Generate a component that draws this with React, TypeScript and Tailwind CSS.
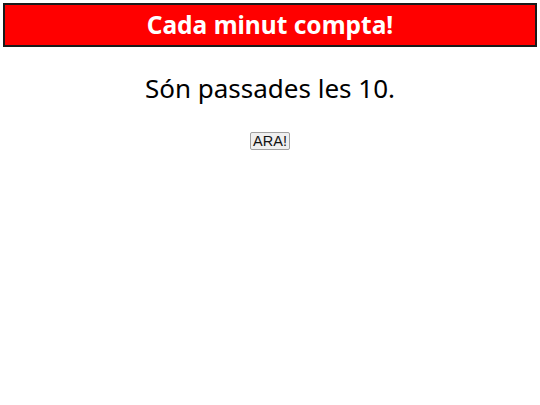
export default function App() {
  return (
    <div className="min-h-[405px] bg-white pt-[3px] px-[3px]">
      <div className="flex h-[44px] items-center justify-center border-2 border-[#1a1a1a] bg-[#ff0000]">
        <h1 className="font-['Noto_Sans',sans-serif] text-[24.5px] font-bold leading-none text-white">Cada minut compta!</h1>
      </div>
      <p className="mt-[25px] text-center font-['Noto_Sans',sans-serif] text-[26px] leading-[32px] text-black">Són passades les 10.</p>
      <div className="mt-[28px] flex justify-center">
        <button className="h-[18px] rounded-[2px] border border-[#a0a0a0] bg-[#efefef] px-[2px] font-['Liberation_Sans',sans-serif] text-[14.5px] leading-[16px] text-[#111]">ARA!</button>
      </div>
    </div>
  );
}
